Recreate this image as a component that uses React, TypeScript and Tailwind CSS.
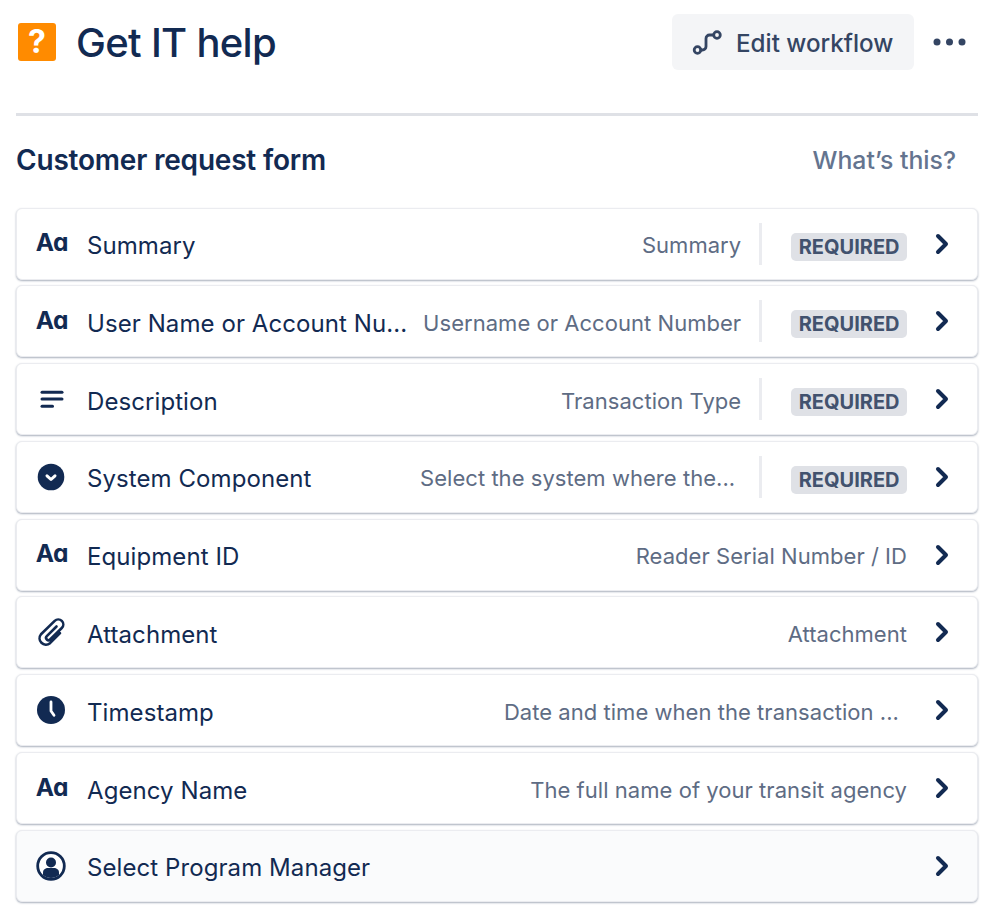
import React from 'react';
import { ChevronRight } from 'lucide-react';

const TextIcon = () => (
  <span className="translate-x-[0.5px] -translate-y-[1px] whitespace-nowrap text-[24.500px] font-bold leading-none tracking-[-1.2px] text-[#122a52]">Aɑ</span>
);

const ParagraphIcon = () => (
  <svg width="30" height="30" viewBox="0 0 30 30" fill="#122a52">
    <rect x="4.500" y="6.700" width="23" height="3" rx="1.500" />
    <rect x="4.500" y="13.500" width="23" height="3" rx="1.500" />
    <rect x="4.500" y="20.700" width="13.500" height="3" rx="1.500" />
  </svg>
);

const SelectIcon = () => (
  <svg width="30" height="30" viewBox="0 0 30 30">
    <circle cx="15" cy="15" r="13.300" fill="#122a52" />
    <path d="M11 13.800 15 17.500l4-3.700" fill="none" stroke="#fff" strokeWidth="3" strokeLinecap="round" strokeLinejoin="round" />
  </svg>
);

const AttachmentIcon = () => (
  <svg width="30" height="30" viewBox="0 0 30 30" fill="none" stroke="#122a52" strokeWidth="2.600" strokeLinecap="round" strokeLinejoin="round">
    <path d="M20.500 9.500 10.800 19.200a2.300 2.300 0 0 0 3.300 3.300L25.800 11a5 5 0 0 0-7.100-7.100L5 17.200a6.400 6.400 0 0 0 9 9L24 16.200" />
  </svg>
);

const ClockIcon = () => (
  <svg width="30" height="30" viewBox="0 0 30 30">
    <circle cx="15" cy="15" r="14" fill="#122a52" />
    <path d="M15 7v9l3 4.300" fill="none" stroke="#fff" strokeWidth="2.800" strokeLinecap="round" strokeLinejoin="round" />
  </svg>
);

const UserIcon = () => (
  <svg width="30" height="30" viewBox="0 0 30 30">
    <circle cx="15" cy="15" r="13.300" fill="#fff" stroke="#122a52" strokeWidth="2.800" />
    <circle cx="15" cy="11.500" r="5" fill="#122a52" />
    <path d="M7 24v-2.500c0-3 2.500-4.500 5-4.500h6c2.500 0 5 1.500 5 4.500V24c-2.200 2-5 3-8 3s-5.800-1-8-3Z" fill="#122a52" />
  </svg>
);

type Field = {
  icon: React.ReactNode;
  label: string;
  hint?: string;
  required?: boolean;
  muted?: boolean;
  hintClass?: string;
};

const fields: Field[] = [
  { icon: <TextIcon />, label: 'Summary', hint: 'Summary', required: true },
  { icon: <TextIcon />, label: 'User Name or Account Nu...', hint: 'Username or Account Number', required: true },
  { icon: <ParagraphIcon />, label: 'Description', hint: 'Transaction Type', required: true },
  { icon: <SelectIcon />, label: 'System Component', hint: 'Select the system where the...', required: true, hintClass: 'pr-[6px]' },
  { icon: <TextIcon />, label: 'Equipment ID', hint: 'Reader Serial Number / ID' },
  { icon: <AttachmentIcon />, label: 'Attachment', hint: 'Attachment' },
  { icon: <ClockIcon />, label: 'Timestamp', hint: 'Date and time when the transaction ...', hintClass: 'pr-[8px]' },
  { icon: <TextIcon />, label: 'Agency Name', hint: 'The full name of your transit agency' },
  { icon: <UserIcon />, label: 'Select Program Manager', muted: true },
];

const FieldRow = ({ field }: { field: Field }) => (
  <div className={`flex h-[72px] items-center rounded-[6px] border border-[#ebecf0] pl-[19px] pr-[19px] shadow-[0_1px_2px_rgba(9,30,66,0.35)] ${field.muted ? 'bg-[#fafbfc]' : 'bg-white'}`}>
    <div className="flex w-[30px] shrink-0 items-center justify-center">{field.icon}</div>
    <div className="ml-[21px] whitespace-nowrap pt-[5px] text-[24px] tracking-[0.08px] text-[#122a52]">{field.label}</div>
    <div className="ml-auto flex min-w-0 items-center pl-[10px]">
      {field.hint && (
        <div className={`whitespace-nowrap pt-[4px] text-[22px] tracking-[0.04px] text-[#5e6c84] ${field.hintClass ?? ''}`}>{field.hint}</div>
      )}
      {field.required && (
        <>
          <div className="ml-[18px] h-[42px] w-[3px] shrink-0 bg-[#ebecf0]" />
          <div className="ml-[29px] mt-[6px] shrink-0 rounded-[5px] bg-[#dfe1e6] px-[7.500px] py-[1px] text-[20px] font-bold leading-[26px] text-[#42526e]">
            REQUIRED
          </div>
        </>
      )}
      <ChevronRight size={32} strokeWidth={3} className="ml-[19px] shrink-0 text-[#122a52]" />
    </div>
  </div>
);

export default function App() {
  return (
    <div className="min-h-[919px] bg-white pl-4 pr-[21px] font-['Inter',sans-serif]">
      <header className="flex h-[113px] items-start pr-[12px]">
        <div className="mt-[23px] ml-[2px] flex h-[38px] w-[38px] items-center justify-center rounded-[3px] bg-[#ff8b00] text-[32px] font-bold leading-none text-white">
          ?
        </div>
        <h1 className="ml-[20px] mt-[18px] text-[40px] font-medium leading-[50px] tracking-[-0.7px] text-[#122a52]">Get IT help</h1>
        <button className="ml-auto mt-[14px] flex h-[56px] w-[242px] items-center gap-[14px] rounded-[6px] bg-[#f4f5f7] pl-[20px] text-[24.200px] font-medium text-[#344563]">
          <svg width="30" height="30" viewBox="0 0 30 30" fill="none" stroke="#344563" strokeWidth="2.800" strokeLinecap="round">
            <circle cx="5.500" cy="23" r="3.300" />
            <circle cx="25" cy="8" r="3.300" />
            <path d="M8.800 23h1.700a3.500 3.500 0 0 0 3.500-3.500v-8a3.500 3.500 0 0 1 3.500-3.500h4.200" />
          </svg>
          <span className="pt-[4px]">Edit workflow</span>
        </button>
        <svg width="33" height="8" viewBox="0 0 33 8" fill="#344563" className="ml-[19px] mt-[38px]">
          <circle cx="4" cy="4" r="3.500" />
          <circle cx="16.500" cy="4" r="3.500" />
          <circle cx="29" cy="4" r="3.500" />
        </svg>
      </header>
      <div className="h-[3px] bg-[#dfe1e6]" />
      <div className="flex h-[91.500px] items-center justify-between pb-[3px] pr-[22px]">
        <h2 className="text-[28px] font-semibold tracking-[-0.2px] text-[#122a52]">Customer request form</h2>
        <a className="text-[24.800px] font-medium text-[#64748f]">What’s this?</a>
      </div>
      <div className="flex flex-col gap-[5.800px]">
        {fields.map((field) => (
          <FieldRow key={field.label} field={field} />
        ))}
      </div>
    </div>
  );
}
